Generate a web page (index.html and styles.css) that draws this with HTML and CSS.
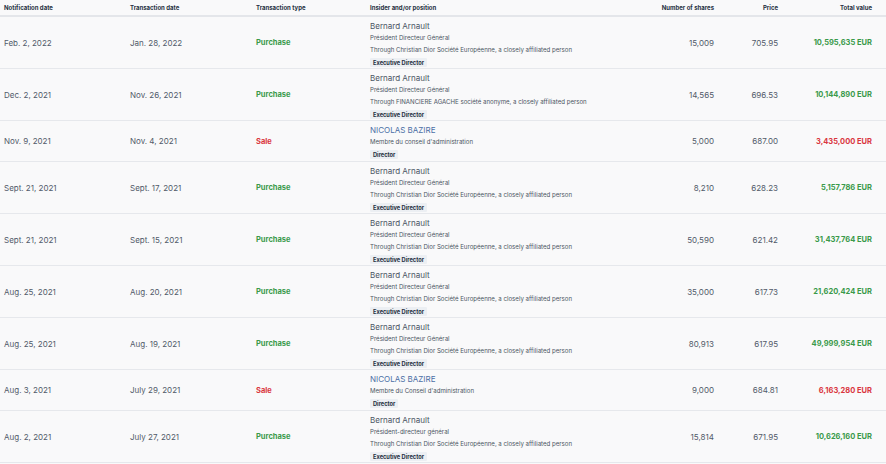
FILE: index.html
```html
<!DOCTYPE html>
<html lang="en">
<head>
<meta charset="utf-8">
<title>Insider transactions</title>
<link rel="stylesheet" href="styles.css">
</head>
<body>
<table class="tx">
  <colgroup>
    <col class="c-notif"><col class="c-trans"><col class="c-type"><col class="c-insider"><col class="c-shares"><col class="c-price"><col class="c-total">
  </colgroup>
  <thead>
    <tr>
      <th class="first">Notification date</th>
      <th>Transaction date</th>
      <th>Transaction type</th>
      <th>Insider and/or position</th>
      <th class="num">Number of shares</th>
      <th class="num">Price</th>
      <th class="num last">Total value</th>
    </tr>
  </thead>
  <tbody>
    <tr>
      <td class="first">Feb. 2, 2022</td><td>Jan. 28, 2022</td><td class="buy">Purchase</td>
      <td class="insider"><div class="name">Bernard Arnault</div><div class="sub">Président Directeur Général</div><div class="sub">Through Christian Dior Société Européenne, a closely affiliated person</div><div class="sub"><span class="badge">Executive Director</span></div></td>
      <td class="num">15,009</td><td class="num">705.95</td><td class="num last buy">10,595,635 EUR</td>
    </tr>
    <tr>
      <td class="first">Dec. 2, 2021</td><td>Nov. 26, 2021</td><td class="buy">Purchase</td>
      <td class="insider"><div class="name">Bernard Arnault</div><div class="sub">Président Directeur Général</div><div class="sub">Through FINANCIERE AGACHE société anonyme, a closely affiliated person</div><div class="sub"><span class="badge">Executive Director</span></div></td>
      <td class="num">14,565</td><td class="num">696.53</td><td class="num last buy">10,144,890 EUR</td>
    </tr>
    <tr>
      <td class="first">Nov. 9, 2021</td><td>Nov. 4, 2021</td><td class="sell">Sale</td>
      <td class="insider short"><div class="name link">NICOLAS BAZIRE</div><div class="sub">Membre du conseil d'administration</div><div class="sub"><span class="badge">Director</span></div></td>
      <td class="num">5,000</td><td class="num">687.00</td><td class="num last sell">3,435,000 EUR</td>
    </tr>
    <tr>
      <td class="first">Sept. 21, 2021</td><td>Sept. 17, 2021</td><td class="buy">Purchase</td>
      <td class="insider"><div class="name">Bernard Arnault</div><div class="sub">Président Directeur Général</div><div class="sub">Through Christian Dior Société Européenne, a closely affiliated person</div><div class="sub"><span class="badge">Executive Director</span></div></td>
      <td class="num">8,210</td><td class="num">628.23</td><td class="num last buy">5,157,786 EUR</td>
    </tr>
    <tr>
      <td class="first">Sept. 21, 2021</td><td>Sept. 15, 2021</td><td class="buy">Purchase</td>
      <td class="insider"><div class="name">Bernard Arnault</div><div class="sub">Président Directeur Général</div><div class="sub">Through Christian Dior Société Européenne, a closely affiliated person</div><div class="sub"><span class="badge">Executive Director</span></div></td>
      <td class="num">50,590</td><td class="num">621.42</td><td class="num last buy">31,437,764 EUR</td>
    </tr>
    <tr>
      <td class="first">Aug. 25, 2021</td><td>Aug. 20, 2021</td><td class="buy">Purchase</td>
      <td class="insider"><div class="name">Bernard Arnault</div><div class="sub">Président Directeur Général</div><div class="sub">Through Christian Dior Société Européenne, a closely affiliated person</div><div class="sub"><span class="badge">Executive Director</span></div></td>
      <td class="num">35,000</td><td class="num">617.73</td><td class="num last buy">21,620,424 EUR</td>
    </tr>
    <tr>
      <td class="first">Aug. 25, 2021</td><td>Aug. 19, 2021</td><td class="buy">Purchase</td>
      <td class="insider"><div class="name">Bernard Arnault</div><div class="sub">Président Directeur Général</div><div class="sub">Through Christian Dior Société Européenne, a closely affiliated person</div><div class="sub"><span class="badge">Executive Director</span></div></td>
      <td class="num">80,913</td><td class="num">617.95</td><td class="num last buy">49,999,954 EUR</td>
    </tr>
    <tr>
      <td class="first">Aug. 3, 2021</td><td>July 29, 2021</td><td class="sell">Sale</td>
      <td class="insider short"><div class="name link">NICOLAS BAZIRE</div><div class="sub">Membre du Conseil d'administration</div><div class="sub"><span class="badge">Director</span></div></td>
      <td class="num">9,000</td><td class="num">684.81</td><td class="num last sell">6,163,280 EUR</td>
    </tr>
    <tr>
      <td class="first">Aug. 2, 2021</td><td>July 27, 2021</td><td class="buy">Purchase</td>
      <td class="insider"><div class="name">Bernard Arnault</div><div class="sub">Président-directeur général</div><div class="sub">Through Christian Dior Société Européenne, a closely affiliated person</div><div class="sub"><span class="badge">Executive Director</span></div></td>
      <td class="num">15,814</td><td class="num">671.95</td><td class="num last buy">10,626,160 EUR</td>
    </tr>
  </tbody>
</table>
</body>
</html>
```

FILE: styles.css
```css
html, body {
  margin: 0;
  padding: 0;
  background: #f9f9fa;
}
body {
  font-family: Inter, "Noto Sans", "Liberation Sans", sans-serif;
  color: #4b5563;
  width: 886px;
}
.tx {
  width: 886px;
  border-collapse: collapse;
  table-layout: fixed;
}
.c-notif { width: 130px; }
.c-trans { width: 126px; }
.c-type { width: 114px; }
.c-insider { width: 230px; }
.c-shares { width: 114px; }
.c-price { width: 64px; }
.c-total { width: 108px; }

.tx th {
  font-size: 6px;
  font-weight: 700;
  color: #263142;
  text-align: left;
  height: 15px;
  padding: 0;
  vertical-align: middle;
  border-bottom: 2px solid #e4e6ea;
}
.tx td {
  font-size: 8px;
  padding: 0;
  vertical-align: middle;
  border-bottom: 1px solid #e6e8ec;
  color: #515a69;
}
.tx .first { padding-left: 4px; }
.tx .num { text-align: right; }
.tx .last { padding-right: 14px; }

.tx td.buy { color: #3a9a4a; font-weight: 700; font-size: 7.5px; }
.tx td.sell { color: #d9363e; font-weight: 700; font-size: 7.5px; }

.tx td.insider {
  padding: 3px 0 0 0;
  vertical-align: top;
}
.tx td.insider.short {
  padding-bottom: 1px;
}
.name {
  font-size: 8px;
  line-height: 12px;
  color: #4b5563;
}
.name.link { color: #4a6ea5; }
.sub {
  font-size: 6.1px;
  line-height: 12px;
  color: #4b5563;
  white-space: nowrap;
}
.badge {
  display: inline-block;
  background: #eceff3;
  color: #263142;
  font-weight: 700;
  font-size: 5.7px;
  line-height: 9px;
  padding: 0 3px;
  border-radius: 1px;
  vertical-align: middle;
}
```
